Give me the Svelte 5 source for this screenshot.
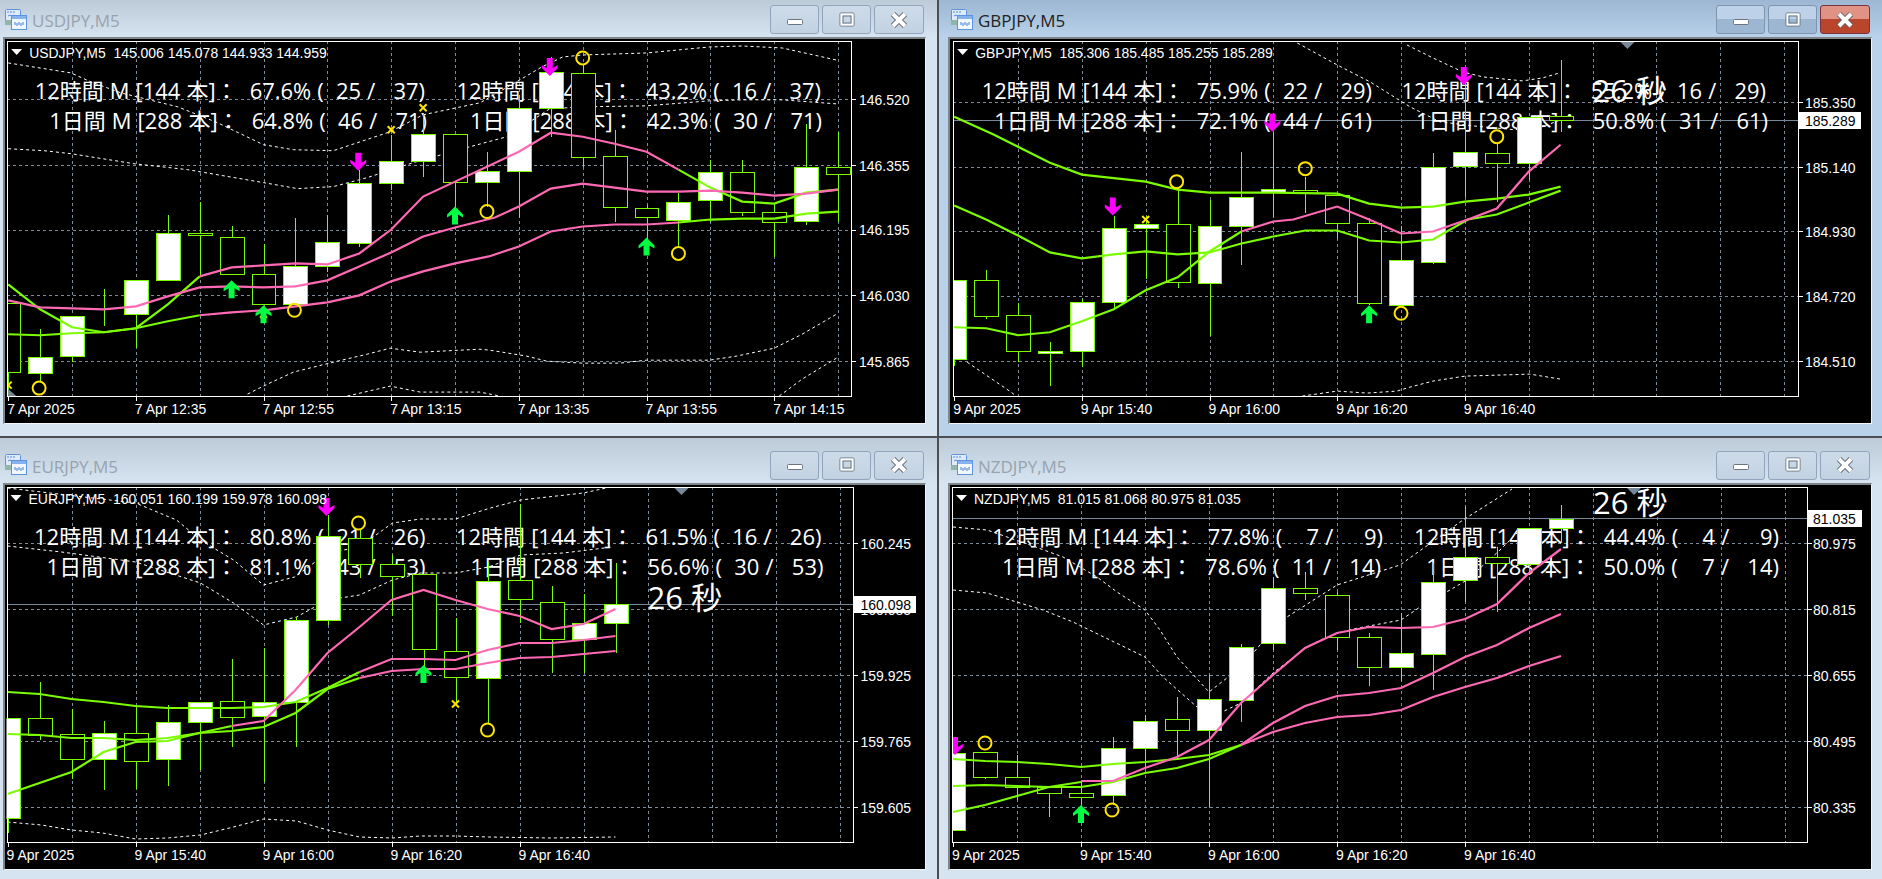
<script>
  const GREEN = '#7cfc00';
  const PINK = '#ff69b4';

  // all chart numbers are page pixels, the svg viewBox lines them up with the page
  const charts = [
    {
      id: 'usd', title: 'USDJPY,M5', cls: 'left top',
      box: [5, 39, 925, 424], plot: [6, 41, 852, 397], lx: 8, tagW: 62,
      info: 'USDJPY,M5  145.006 145.078 144.933 144.959',
      vx: [71, 135, 199, 263, 327, 391, 455, 519, 583, 647, 711, 775, 839],
      times: [[7, '7 Apr 2025'], [135, '7 Apr 12:35'], [263, '7 Apr 12:55'], [391, '7 Apr 13:15'], [519, '7 Apr 13:35'], [647, '7 Apr 13:55'], [775, '7 Apr 14:15']],
      prices: [[99, '146.520'], [165, '146.355'], [230, '146.195'], [296, '146.030'], [362, '145.865']],
      rows: [
        [425, 99, '12時間 M [144 本]：  67.6% (  25 /   37)'],
        [427, 129, '1日間 M [288 本]：  64.8% (  46 /   71)'],
        [822, 99, '12時間 [144 本]：  43.2% (  16 /   37)'],
        [823, 129, '1日間 [288 本]：  42.3% (  30 /   71)'],
      ],
      candles: [
        [7, 304, 396, 304, 373, 0], [39, 330, 383, 358, 374, 1], [71, 317, 363, 317, 357, 1], [103, 290, 327, 316, 316, 0],
        [135, 281, 349, 281, 315, 1], [167, 215, 281, 234, 281, 1], [199, 202, 277, 234, 236, 0], [231, 226, 275, 238, 275, 0],
        [263, 245, 305, 275, 305, 0], [295, 218, 305, 267, 305, 1], [327, 215, 273, 243, 267, 1], [359, 170, 248, 183, 244, 1],
        [391, 135, 190, 161, 183, 1], [423, 113, 177, 134, 161, 1], [455, 134, 213, 134, 182, 0], [487, 152, 207, 171, 182, 1],
        [519, 95, 218, 108, 171, 1], [551, 57, 137, 72, 108, 1], [583, 65, 167, 73, 157, 0], [615, 130, 222, 156, 207, 0],
        [647, 205, 240, 208, 217, 0], [679, 193, 248, 202, 220, 1], [711, 160, 222, 172, 200, 1], [743, 160, 216, 172, 212, 0],
        [775, 204, 258, 212, 222, 0], [807, 124, 225, 167, 221, 1], [839, 132, 222, 167, 174, 0],
      ],
      green: [
        '7,285 39,310 71,328 103,333 135,329 167,305 199,277',
        '679,170 711,188 743,202 775,204 807,193 839,190',
        '7,335 39,336 71,334 103,333 135,329 167,322 199,316',
        '679,223 711,220 743,219 775,219 807,214 839,212',
      ],
      pink: [
        '199,277 231,268 263,266 295,264 327,265 359,254 391,230 423,197 455,182 487,167 519,152 551,133 583,137 615,144 647,152 679,170',
        '7,301 39,308 71,309 103,310 135,307 167,297 199,288 231,287 263,288 295,287 327,281 359,267 391,253 423,237 455,228 495,218 519,207 551,189 583,184 615,188 647,192 679,192 711,191 743,193 775,196 807,194 839,190',
        '199,316 231,313 263,311 295,307 327,303 359,296 391,282 423,272 455,264 489,257 519,247 551,232 583,227 615,225 647,225 679,223',
      ],
      dots: [
        '7,63 70,73 90,82 120,93 177,107 217,123 263,145 293,150 333,151 390,132 423,115 480,103 520,80 542,67 563,57 583,55 647,53 710,47 743,46 783,48 837,60',
        '7,149 43,151 70,154 133,164 187,170 263,183 297,189 333,187 367,178 413,163 470,147 507,137 550,109 583,107 647,106 710,101 743,100 783,100 837,104',
        '247,395 267,385 293,373 333,363 367,355 390,349 420,353 480,350 490,351 527,357 547,362 583,364 620,364 647,361 710,361 737,357 775,349 803,335 839,314',
        '347,397 390,387 420,393 480,393 500,397',
        '780,397 803,380 839,358',
      ],
      down: [[358, 171], [550, 76]],
      up: [[231, 281], [263, 306], [455, 207], [647, 238]],
      rings: [[38, 389], [294, 311], [583, 58], [487, 212], [679, 254]],
      crosses: [[7, 386], [391, 130], [423, 108], [263, 315]],
      corner: true,
    },
    {
      id: 'gbp', title: 'GBPJPY,M5', cls: 'right top', active: true,
      box: [950, 39, 1871, 424], plot: [952, 41, 1799, 397], lx: 7, tagW: 62,
      info: 'GBPJPY,M5  185.306 185.485 185.255 185.289',
      vx: [1017, 1081, 1145, 1209, 1273, 1337, 1401, 1465, 1529, 1593, 1657, 1721, 1785],
      times: [[953, '9 Apr 2025'], [1081, '9 Apr 15:40'], [1209, '9 Apr 16:00'], [1337, '9 Apr 16:20'], [1465, '9 Apr 16:40']],
      prices: [[102, '185.350'], [167, '185.140'], [232, '184.930'], [297, '184.720'], [362, '184.510']],
      last: [120, '185.289'], mark: 1620,
      rows: [
        [1372, 99, '12時間 M [144 本]：  75.9% (  22 /   29)'],
        [1372, 129, '1日間 M [288 本]：  72.1% (  44 /   61)'],
        [1767, 99, '12時間 [144 本]：  55.2% (  16 /   29)'],
        [1769, 129, '1日間 [288 本]：  50.8% (  31 /   61)'],
      ],
      timer: [1593, 102],
      candles: [
        [953, 281, 367, 281, 360, 1], [985, 271, 320, 281, 317, 0], [1017, 304, 363, 316, 352, 0], [1049, 343, 387, 352, 354, 1],
        [1081, 300, 368, 303, 352, 1], [1113, 216, 310, 228, 303, 1], [1145, 216, 280, 224, 228, 1], [1177, 188, 289, 224, 283, 0],
        [1209, 200, 337, 226, 284, 1], [1241, 152, 266, 197, 226, 1], [1273, 132, 217, 189, 192, 1], [1305, 177, 213, 190, 193, 0],
        [1337, 195, 240, 195, 223, 0], [1369, 218, 306, 223, 304, 0], [1401, 226, 306, 261, 306, 1], [1433, 153, 265, 167, 263, 1],
        [1465, 85, 197, 152, 166, 1], [1497, 143, 202, 153, 163, 0], [1529, 117, 180, 117, 163, 1], [1561, 60, 132, 116, 120, 0],
      ],
      green: [
        '953,328 985,329 1017,336 1049,333 1081,322 1113,310 1145,291 1177,278 1209,252 1241,232',
        '953,117 993,135 1049,163 1081,175 1145,182 1177,190 1209,193 1273,193 1337,194 1369,204 1401,208 1433,207 1465,202 1497,199 1529,195 1561,187',
        '953,206 985,220 1017,236 1049,253 1081,259 1113,255 1145,252 1177,255 1209,253 1241,244 1273,237 1305,231 1337,231 1369,241 1401,243 1433,240 1468,220 1497,215 1529,203 1561,191',
      ],
      pink: ['1241,232 1273,222 1293,220 1337,207 1369,220 1401,234 1433,232 1468,220 1497,209 1529,172 1561,145'],
      dots: [
        '1407,45 1433,58 1463,72 1483,77 1523,81 1543,78 1560,73',
        '1297,43 1337,65 1370,82 1410,107 1420,112 1440,122 1472,126 1515,130 1543,127 1561,120',
        '966,363 1010,393 1015,397',
        '1302,397 1337,392 1367,394 1397,392 1410,388 1433,382 1465,377 1530,375 1561,380',
      ],
      down: [[1112, 216], [1272, 132], [1464, 85]],
      up: [[1369, 306]],
      rings: [[1176, 182], [1305, 169], [1401, 314], [1497, 137]],
      crosses: [[1145, 220]],
    },
    {
      id: 'eur', title: 'EURJPY,M5', cls: 'left bottom',
      box: [5, 485, 924, 869], plot: [6, 487, 852, 842], lx: 8, tagW: 62,
      info: 'EURJPY,M5  160.051 160.199 159.978 160.098',
      vx: [71, 135, 199, 263, 327, 391, 455, 519, 583, 647, 711, 775, 839],
      times: [[7, '9 Apr 2025'], [135, '9 Apr 15:40'], [263, '9 Apr 16:00'], [391, '9 Apr 16:20'], [519, '9 Apr 16:40']],
      prices: [[543, '160.245'], [609, '160.085'], [675, '159.925'], [741, '159.765'], [807, '159.605']],
      last: [604, '160.098'], mark: 673,
      rows: [
        [425, 545, '12時間 M [144 本]：  80.8% (  21 /   26)'],
        [425, 575, '1日間 M [288 本]：  81.1% (  43 /   53)'],
        [821, 545, '12時間 [144 本]：  61.5% (  16 /   26)'],
        [823, 575, '1日間 [288 本]：  56.6% (  30 /   53)'],
      ],
      timer: [647, 609],
      candles: [
        [7, 718, 833, 718, 818, 1], [39, 682, 740, 718, 735, 0], [71, 709, 779, 734, 759, 0], [103, 721, 790, 733, 759, 1],
        [135, 705, 789, 733, 761, 0], [167, 705, 786, 722, 759, 1], [199, 702, 770, 702, 722, 1], [231, 659, 747, 701, 717, 0],
        [263, 648, 782, 702, 716, 1], [295, 617, 747, 620, 702, 1], [327, 515, 625, 536, 620, 1], [359, 530, 578, 538, 564, 0],
        [391, 555, 616, 564, 576, 0], [423, 574, 667, 574, 649, 0], [455, 618, 703, 651, 677, 0], [487, 562, 723, 581, 678, 1],
        [519, 504, 623, 580, 599, 0], [551, 586, 673, 602, 639, 0], [583, 594, 673, 623, 639, 1], [615, 563, 653, 604, 623, 1],
      ],
      green: [
        '7,794 71,772 103,752 135,742 167,741 199,733 231,731 263,727 295,713 327,689 359,678',
        '7,734 39,735 71,738 103,738 135,740 167,738 199,733 231,726',
        '7,692 39,694 71,699 103,702 135,706 167,708 199,708 231,708 263,707 295,702 327,688 359,672',
      ],
      pink: [
        '359,678 391,671 423,669 455,669 487,663 519,658 551,657 583,654 615,651',
        '231,726 263,721 295,690 327,653 359,627 391,600 423,590 455,600 487,609 519,616 551,629 583,624 615,609',
        '359,672 391,659 423,659 455,660 487,650 519,643 551,643 583,640 615,636',
      ],
      dots: [
        '7,488 41,492 135,503 176,520 200,540 233,560 263,585 294,577 327,553 359,547 392,523 420,519 455,519 490,508 520,500 583,493 610,487',
        '7,546 61,552 135,562 200,583 233,603 263,625 296,617 327,600 359,595 392,580 420,573 455,573 488,567 520,555 563,553 612,547',
        '7,822 41,825 71,830 102,833 135,839 167,838 200,835 233,827 263,819 296,821 327,830 359,837 392,838 420,836 455,836 488,837 551,838 615,837',
      ],
      down: [[326, 516]],
      up: [[423, 665]],
      rings: [[358, 523], [487, 730]],
      crosses: [[455, 704]],
    },
    {
      id: 'nzd', title: 'NZDJPY,M5', cls: 'right bottom',
      box: [950, 485, 1871, 869], plot: [952, 487, 1807, 842], lx: 6, tagW: 54,
      info: 'NZDJPY,M5  81.015 81.068 80.975 81.035',
      vx: [1017, 1081, 1145, 1209, 1273, 1337, 1401, 1465, 1529, 1593, 1657, 1721, 1785],
      times: [[953, '9 Apr 2025'], [1081, '9 Apr 15:40'], [1209, '9 Apr 16:00'], [1337, '9 Apr 16:20'], [1465, '9 Apr 16:40']],
      prices: [[543, '80.975'], [609, '80.815'], [675, '80.655'], [741, '80.495'], [807, '80.335']],
      last: [518, '81.035'], mark: 1626,
      rows: [
        [1383, 545, '12時間 M [144 本]：  77.8% (    7 /     9)'],
        [1381, 575, '1日間 M [288 本]：  78.6% (  11 /   14)'],
        [1779, 545, '12時間 [144 本]：  44.4% (    4 /     9)'],
        [1779, 575, '1日間 [288 本]：  50.0% (    7 /   14)'],
      ],
      timer: [1593, 514],
      candles: [
        [953, 753, 830, 753, 830, 1], [985, 752, 779, 752, 777, 0], [1017, 755, 800, 777, 787, 0], [1049, 787, 817, 787, 793, 0],
        [1081, 780, 805, 793, 797, 0], [1113, 737, 803, 748, 795, 1], [1145, 715, 767, 721, 748, 1], [1177, 697, 760, 719, 730, 0],
        [1209, 675, 807, 699, 730, 1], [1241, 644, 722, 647, 700, 1], [1273, 577, 650, 588, 643, 1], [1305, 572, 600, 588, 593, 0],
        [1337, 592, 650, 595, 637, 0], [1369, 633, 686, 637, 667, 0], [1401, 613, 681, 653, 667, 1], [1433, 563, 690, 582, 654, 1],
        [1465, 507, 602, 557, 580, 1], [1497, 547, 612, 557, 563, 0], [1529, 528, 573, 528, 564, 1], [1561, 505, 543, 519, 528, 1],
      ],
      green: [
        '953,812 985,805 1017,796 1049,787 1081,782',
        '953,786 985,785 1017,786 1049,787 1081,787 1113,782 1145,773 1177,768 1209,759 1241,745',
        '953,759 985,761 1017,762 1049,764 1081,767 1113,764 1145,762 1177,759 1209,755 1241,745',
      ],
      pink: [
        '1081,781 1113,781 1145,768 1177,757 1209,740 1241,703 1273,675 1305,648 1337,633 1369,627 1401,628 1433,627 1465,619 1497,604 1529,573 1561,549',
        '1241,745 1273,723 1305,706 1337,696 1369,693 1401,688 1433,673 1465,657 1497,645 1529,628 1561,614',
        '1241,745 1273,732 1305,723 1337,717 1369,715 1401,710 1433,697 1465,687 1497,678 1529,666 1561,656',
      ],
      dots: [
        '953,527 987,530 1030,545 1063,557 1097,577 1117,592 1145,610 1160,630 1177,657 1209,692 1241,667 1273,630 1287,617 1337,585 1400,565 1463,520 1512,489',
        '953,590 987,593 1043,610 1073,622 1145,657 1163,677 1197,707 1220,713 1241,703 1273,673 1307,647 1337,632 1401,620 1420,607 1450,590 1467,580 1500,550 1520,530',
      ],
      down: [[955, 755]],
      up: [[1081, 805]],
      rings: [[985, 743], [1112, 810]],
      crosses: [],
    },
  ];

  const downArrow = (x, y) => `${x},${y} ${x + 8},${y - 8} ${x + 8},${y - 11} ${x + 3},${y - 8} ${x + 3},${y - 18} ${x - 3},${y - 18} ${x - 3},${y - 8} ${x - 8},${y - 11} ${x - 8},${y - 8}`;
  const upArrow = (x, y) => `${x},${y} ${x + 8},${y + 8} ${x + 8},${y + 11} ${x + 3},${y + 8} ${x + 3},${y + 18} ${x - 3},${y + 18} ${x - 3},${y + 8} ${x - 8},${y + 11} ${x - 8},${y + 8}`;
</script>

<div class="desk">
  {#each charts as c}
    {@const [bx0, by0, bx1, by1] = c.box}
    {@const [px0, py0, px1, py1] = c.plot}
    <section class="win {c.cls}" class:active={c.active}>
      <header class="title">
        <svg class="icon" width="22" height="22" viewBox="0 0 22 22">
          <rect x="0.5" y="1.5" width="15" height="14" rx="1" fill="#dfeafa" stroke="#5d93dc" />
          <path d="M2 4h2M5 4h2M8 4h2M3 8l2-1 2 1 2-1" stroke="#4f8ae0" fill="none" />
          <rect x="0" y="12" width="6" height="5" fill="#8fb6a8" />
          <rect x="6.5" y="7.5" width="15" height="14" fill="#f2f7fe" stroke="#5d93dc" />
          <rect x="7" y="8" width="14" height="3" fill="#86b3ee" />
          <path d="M10 17v-3M12 18v-3M14 17v-3M16 18v-3M18 17v-3" stroke="#3f7fd8" fill="none" />
        </svg>
        <span class="name">{c.title}</span>
        <div class="btns">
          <button class="btn" aria-label="minimize">
            <svg width="20" height="16" viewBox="0 0 20 16"><rect x="2.5" y="7.5" width="15" height="5" rx="1" fill="#fff" stroke="#6b7480" /></svg>
          </button>
          <button class="btn" aria-label="maximize">
            <svg width="20" height="18" viewBox="0 0 20 18"><rect x="3" y="2" width="14" height="13" rx="1" fill="none" stroke="#6b7480" /><rect x="4.5" y="3.5" width="11" height="10" fill="none" stroke="#fff" stroke-width="2" /><rect x="6" y="5" width="8" height="7" fill="none" stroke="#6b7480" /></svg>
          </button>
          <button class="btn close" aria-label="close">
            <svg width="20" height="18" viewBox="0 0 20 18"><path d="M4 3l12 12M16 3L4 15" stroke="#5c6268" stroke-width="6" /><path d="M4 3l12 12M16 3L4 15" stroke="#fff" stroke-width="4" /></svg>
          </button>
        </div>
      </header>
      <div class="client">
        <svg class="chart" viewBox="{bx0} {by0} {bx1 - bx0} {by1 - by0}">
          <defs>
            <clipPath id="clip-{c.id}"><rect x={px0} y={py0} width={px1 - px0} height={py1 - py0} /></clipPath>
          </defs>

          {#each c.vx as x}
            <line class="grid" x1={x + 0.5} y1={py0} x2={x + 0.5} y2={py1} />
          {/each}
          {#each c.prices as [y]}
            <line class="grid" x1={px0} y1={y + 0.5} x2={px1} y2={y + 0.5} />
            <line class="tick" x1={px1} y1={y + 0.5} x2={px1 + 5} y2={y + 0.5} />
          {/each}
          {#each c.times as [x]}
            <line class="tick" x1={x + 0.5} y1={py1} x2={x + 0.5} y2={py1 + 5} />
          {/each}
          {#if c.last}
            <line class="lastline" x1={px0} y1={c.last[0] + 0.5} x2={px1} y2={c.last[0] + 0.5} />
          {/if}

          {#each c.rows as [x, y, s]}
            <text class="stat" {x} {y}>{s}</text>
          {/each}
          {#if c.timer}
            <text class="timer" x={c.timer[0]} y={c.timer[1]}>26 秒</text>
          {/if}

          <g clip-path="url(#clip-{c.id})">
            {#each c.dots as pts}
              <polyline class="dot" points={pts} />
            {/each}
            {#each c.candles as [x, hi, lo, top, bot, up]}
              <line class="wick" x1={x + 0.5} y1={hi} x2={x + 0.5} y2={lo} />
              <rect class="body" x={x - 11.5} y={top + 0.5} width="24" height={bot - top} fill={up ? '#fff' : '#000'} />
            {/each}
            {#each c.green as pts}
              <polyline class="ma" points={pts} stroke={GREEN} />
            {/each}
            {#each c.pink as pts}
              <polyline class="ma" points={pts} stroke={PINK} />
            {/each}
            {#each c.rings as [x, y]}
              <circle class="ring" cx={x} cy={y} r="6.5" />
            {/each}
            {#each c.crosses as [x, y]}
              <path class="cross" d="M{x - 3.5} {y - 3.5}l7 7M{x + 3.5} {y - 3.5}l-7 7" />
            {/each}
            {#each c.down as [x, y]}
              <polygon class="sell" points={downArrow(x, y)} />
            {/each}
            {#each c.up as [x, y]}
              <polygon class="buy" points={upArrow(x, y)} />
            {/each}
          </g>

          {#if c.corner}
            <polygon class="mark" points="{px0 + 1},{py1 - 7} {px0 + 9},{py1} {px0 + 1},{py1}" />
          {/if}
          {#if c.mark}
            <polygon class="mark" points="{c.mark},{py0} {c.mark + 16},{py0} {c.mark + 8},{py0 + 8}" />
          {/if}

          <rect class="frame" x={px0 + 0.5} y={py0 + 0.5} width={px1 - px0} height={py1 - py0} />

          <polygon class="tri" points="{px0 + 4},{py0 + 8} {px0 + 15},{py0 + 8} {px0 + 9.5},{py0 + 14}" />
          <text class="small" x={px0 + 22} y={py0 + 17}>{c.info}</text>

          {#each c.prices as [y, s]}
            <text class="small" x={px1 + c.lx} y={y + 6}>{s}</text>
          {/each}
          {#each c.times as [x, s]}
            <text class="small" x={x - 1} y={py1 + 18}>{s}</text>
          {/each}
          {#if c.last}
            <rect class="tag" x={px1 + 1} y={c.last[0] - 8} width={c.tagW} height="17" />
            <text class="small dark" x={px1 + c.lx} y={c.last[0] + 6}>{c.last[1]}</text>
          {/if}
        </svg>
      </div>
    </section>
  {/each}
</div>

<style>
  :global(body) {
    margin: 0;
    background: #4b4f54;
  }
  .desk {
    display: grid;
    grid-template-columns: 937px 943px;
    grid-template-rows: 436px 441px;
    gap: 2px;
    width: 1882px;
    height: 879px;
    overflow: hidden;
    font-family: "Liberation Sans", "Noto Sans CJK JP", sans-serif;
  }
  .win {
    display: flex;
    flex-direction: column;
    background: #d6e4f1;
    min-width: 0;
  }
  .win.active {
    background: #b9d2ea;
  }
  .title {
    display: flex;
    align-items: center;
    box-sizing: border-box;
    height: 37px;
    flex: none;
    padding: 5px 13px 3px 5px;
    background: linear-gradient(#bdcad8, #d6e4f2);
  }
  .bottom .title {
    height: 45px;
    padding-top: 12px;
  }
  .active .title {
    background: linear-gradient(#9db6d2, #b9d2ea);
  }
  .right .title {
    padding-left: 12px;
    padding-right: 12px;
  }
  .icon {
    flex: none;
    margin-top: -2px;
  }
  .name {
    margin-left: 5px;
    font: 17px "Open Sans", sans-serif;
    color: #98a3ad;
    position: relative;
    top: 1px;
  }
  .active .name {
    color: #222;
  }
  .btns {
    display: flex;
    gap: 3px;
    margin-left: auto;
  }
  .btn {
    display: flex;
    align-items: center;
    justify-content: center;
    box-sizing: border-box;
    width: 49px;
    height: 29px;
    padding: 0;
    border: 1px solid #92a5bd;
    border-radius: 3px;
    background: linear-gradient(#cddbe9, #c3d2e2);
  }
  .active .btn {
    background: linear-gradient(#bdd2e8 50%, #9db7d3 50%);
    border-color: #7f94ae;
  }
  .active .close {
    background: linear-gradient(#e09384 50%, #b9452c 50%);
    border-color: #7a3340;
  }
  .close {
    width: 50px;
  }
  .client {
    flex: 1;
    min-height: 0;
    margin: 0 11px 12px 3px;
    border-top: 2px solid #7e8488;
    border-left: 2px solid #7e8488;
    border-right: 1px solid #f2f7fb;
    border-bottom: 1px solid #f2f7fb;
    background: #000;
  }
  .left .client {
    margin-right: 11px;
  }
  .right .client {
    margin-left: 9px;
    margin-right: 10px;
  }
  .bottom .client {
    margin-bottom: 9px;
  }
  .chart {
    display: block;
    width: 100%;
    height: 100%;
    shape-rendering: crispEdges;
  }
  .grid {
    stroke: #7f8c9a;
    stroke-width: 1;
    stroke-dasharray: 3 3;
  }
  .tick {
    stroke: #fff;
    stroke-width: 1;
  }
  .lastline {
    stroke: #778899;
    stroke-width: 1;
  }
  .frame {
    fill: none;
    stroke: #fff;
    stroke-width: 1;
  }
  .wick {
    stroke: #7cfc00;
    stroke-width: 1;
  }
  .body {
    stroke: #7cfc00;
    stroke-width: 1;
  }
  .dot {
    fill: none;
    stroke: #fff;
    stroke-width: 1;
    stroke-dasharray: 3 3;
    shape-rendering: auto;
  }
  .ma {
    fill: none;
    stroke-width: 2.2;
    shape-rendering: auto;
  }
  .ring {
    fill: none;
    stroke: #ffe600;
    stroke-width: 2;
    shape-rendering: auto;
  }
  .cross {
    fill: none;
    stroke: #ffe600;
    stroke-width: 2;
    shape-rendering: auto;
  }
  .sell {
    fill: #ff00ff;
    shape-rendering: auto;
  }
  .buy {
    fill: #00ff40;
    shape-rendering: auto;
  }
  .mark {
    fill: #778899;
    shape-rendering: auto;
  }
  .tri {
    fill: #fff;
    shape-rendering: auto;
  }
  .tag {
    fill: #fff;
  }
  text {
    white-space: pre;
    fill: #fff;
  }
  .small {
    font-size: 14px;
  }
  .small.dark {
    fill: #000;
  }
  .stat {
    font-family: "Open Sans", "Noto Sans CJK JP", sans-serif;
    font-size: 22px;
    word-spacing: 0.4px;
    text-anchor: end;
  }
  .timer {
    font-family: "Open Sans", "Noto Sans CJK JP", sans-serif;
    font-size: 31px;
  }
</style>
